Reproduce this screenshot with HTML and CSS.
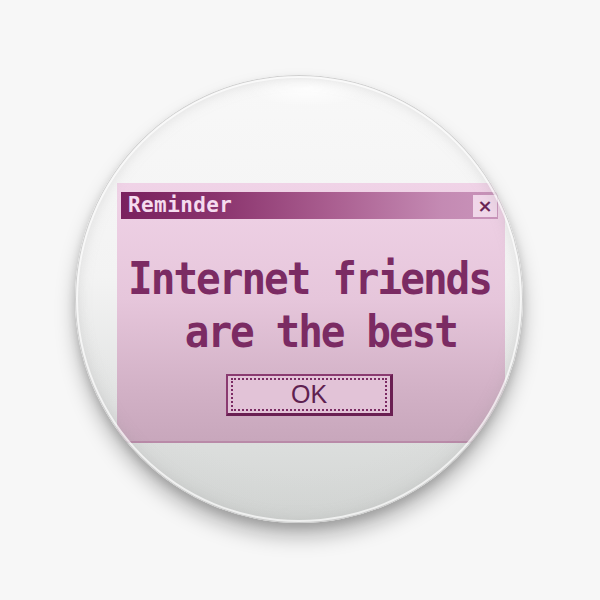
FILE: index.html
```html
<!DOCTYPE html>
<html>
<head>
<meta charset="utf-8">
<link rel="stylesheet" href="styles.css">
</head>
<body>
<div class="pin">
  <div class="dialog">
    <div class="titlebar">
      <span class="title">Reminder</span>
      <span class="close">×</span>
    </div>
    <div class="message">
      <div class="line">Internet friends</div>
      <div class="line">&nbsp;are the best</div>
    </div>
    <div class="okrow">
      <div class="ok"><span class="ok-inner">OK</span></div>
    </div>
  </div>
  <div class="gloss"></div>
</div>
</body>
</html>
```

FILE: styles.css
```css
html, body {
  margin: 0;
  padding: 0;
}
body {
  width: 600px;
  height: 600px;
  background: #f7f7f7;
  overflow: hidden;
}
.pin {
  position: relative;
  width: 448px;
  height: 448px;
  margin: 75px 0 0 75px;
  border-radius: 50%;
  overflow: hidden;
  background:
    radial-gradient(circle at 50% 40%, rgba(255,255,255,0) 62%, rgba(200,200,200,0.35) 92%, rgba(170,170,170,0.45) 100%),
    linear-gradient(to bottom, #f8f8f8 0%, #f3f3f3 45%, #dcdedd 82%, #d2d5d3 100%);
  box-shadow: 0 14px 20px rgba(0,0,0,0.26), 0 5px 8px rgba(0,0,0,0.14);
  padding: 108px 0 0 42px;
  box-sizing: border-box;
}
.dialog {
  width: 388px;
  height: 260px;
  box-sizing: border-box;
  padding: 9px 7px 0 4px;
  background: linear-gradient(to bottom, #f0d3e7 0%, #e6c6db 45%, #d2b1c6 80%, #c8a7bc 100%);
  border-bottom: 2px solid #b98aa8;
  display: flex;
  flex-direction: column;
}
.titlebar {
  height: 27px;
  flex: none;
  display: flex;
  align-items: center;
  justify-content: space-between;
  background: linear-gradient(to right, #79215e 0%, #8a336d 25%, #a95d8f 55%, #c48ab3 85%, #c994ba 100%);
}
.title {
  font-family: "DejaVu Sans Mono", monospace;
  font-weight: bold;
  font-size: 21px;
  letter-spacing: 0.4px;
  color: #f5dcef;
  padding-left: 7px;
  line-height: 27px;
}
.close {
  width: 24px;
  height: 22px;
  margin-right: 1px;
  background: #f0d7e9;
  color: #6b2556;
  font-family: "DejaVu Sans", sans-serif;
  font-weight: bold;
  font-size: 18px;
  line-height: 22px;
  text-align: center;
}
.message {
  margin-top: 35px;
  text-align: center;
  font-family: "DejaVu Sans Mono", monospace;
  font-weight: bold;
  font-size: 41px;
  line-height: 53px;
  letter-spacing: -2px;
  color: #7b2b63;
}
.line {
  white-space: pre;
  transform: scaleY(1.08);
  transform-origin: 50% 75%;
}
.okrow {
  margin-top: 14px;
  display: flex;
  justify-content: center;
}
.ok {
  width: 167px;
  height: 42px;
  box-sizing: border-box;
  border-top: 2px solid #8a3a70;
  border-left: 2px solid #8a3a70;
  border-right: 3px solid #6a1f52;
  border-bottom: 3px solid #6a1f52;
  padding: 2px 3px 2px 3px;
  background: #e2c3d7;
  display: flex;
}
.ok-inner {
  flex: 1;
  border: 2px dotted #7b2b63;
  display: flex;
  align-items: center;
  justify-content: center;
  font-family: "Liberation Sans", Arial, sans-serif;
  font-size: 25px;
  color: #5e2150;
}
.gloss {
  position: absolute;
  inset: 0;
  border-radius: 50%;
  box-shadow: inset 0 0 0 1px rgba(180,180,180,0.6), inset 0 0 0 3px rgba(255,255,255,0.7), inset 0 0 16px rgba(150,150,150,0.35);
  background: radial-gradient(ellipse 60px 18px at 52% 3%, rgba(255,255,255,0.9), rgba(255,255,255,0));
  pointer-events: none;
}
```
